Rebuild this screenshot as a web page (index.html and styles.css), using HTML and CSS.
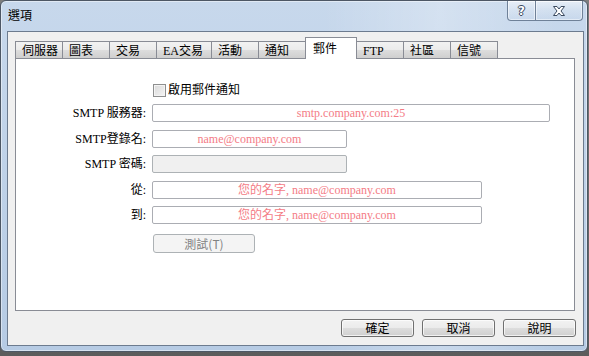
FILE: index.html
```html
<!DOCTYPE html>
<html lang="zh-Hant">
<head>
    <meta charset="UTF-8">
    <meta name="viewport" content="width=device-width, initial-scale=1.0">
    <title>選項</title>
    <link rel="stylesheet" href="styles.css">
</head>
<body>
    <div class="window">
        <div class="titlebar">
            <span class="title">選項</span>
            <div class="caption-buttons">
                <span class="cap-btn help">?</span>
                <span class="cap-btn close">
                    <svg width="14" height="10" viewBox="0 0 14 10">
                        <path d="M1.5 0.5 H5 L7 3 L9 0.5 H12.5 L9 5 L12.5 9.5 H9 L7 7 L5 9.5 H1.5 L5 5 Z" fill="#ffffff" stroke="#3b4a5f" stroke-width="1"/>
                    </svg>
                </span>
            </div>
        </div>

        <div class="client">
            <div class="tabs">
                <div class="tab">伺服器</div>
                <div class="tab">圖表</div>
                <div class="tab">交易</div>
                <div class="tab tab-wide">EA交易</div>
                <div class="tab">活動</div>
                <div class="tab">通知</div>
                <div class="tab active">郵件</div>
                <div class="tab">FTP</div>
                <div class="tab">社區</div>
                <div class="tab">信號</div>
            </div>

            <div class="panel">
                <div class="form">
                    <span></span>
                    <label class="check-row">
                        <span class="checkbox"></span>
                        啟用郵件通知
                    </label>

                    <span class="label">SMTP 服務器:</span>
                    <input class="field field-long" type="text" placeholder="smtp.company.com:25">

                    <span class="label">SMTP登錄名:</span>
                    <input class="field field-short" type="text" placeholder="name@company.com">

                    <span class="label">SMTP 密碼:</span>
                    <input class="field field-short" type="password" disabled>

                    <span class="label">從:</span>
                    <input class="field field-mid" type="text" placeholder="您的名字, name@company.com">

                    <span class="label">到:</span>
                    <input class="field field-mid" type="text" placeholder="您的名字, name@company.com">

                    <span></span>
                    <button class="btn btn-test" disabled>測試(T)</button>
                </div>
            </div>

            <div class="actions">
                <button class="btn">確定</button>
                <button class="btn">取消</button>
                <button class="btn">說明</button>
            </div>
        </div>
    </div>
</body>
</html>
```

FILE: styles.css
```css
:root {
    --frame: #bcd0e8;
    --client: #f0f0f0;
    --tab-border: #898c95;
    --field-border: #abadb3;
    --hint: #f47c86;
    --text: #000000;
}

body {
    margin: 0;
    width: 589px;
    height: 356px;
    background: linear-gradient(#7d7d7d, #5c5c5c);
    font-family: "Liberation Serif", "Noto Sans CJK TC", serif;
    font-size: 12px;
    color: var(--text);
    overflow: hidden;
}

.window {
    width: 588px;
    height: 352px;
    box-sizing: border-box;
    border: 1px solid #4d5765;
    border-radius: 6px;
    background:
        linear-gradient(90deg, rgba(255, 255, 255, 0) 55%, rgba(255, 255, 255, 0.25) 75%, rgba(255, 255, 255, 0) 95%),
        linear-gradient(#c7d8ec, #b6cbe4);
    box-shadow: inset 0 0 0 1px rgba(255, 255, 255, 0.45);
    display: flex;
    flex-direction: column;
}

.titlebar {
    height: 30px;
    display: flex;
    justify-content: space-between;
    align-items: flex-start;
}

.title {
    padding: 7px 0 0 7px;
    font-family: "Noto Sans CJK TC", sans-serif;
    font-size: 12px;
    line-height: 14px;
}

.caption-buttons {
    display: flex;
    margin-right: 4px;
}

.cap-btn {
    height: 20px;
    box-sizing: border-box;
    border: 1px solid #6f8198;
    border-top: none;
    background: linear-gradient(rgba(255, 255, 255, 0.55), rgba(255, 255, 255, 0.2) 50%, rgba(200, 215, 235, 0.3));
    box-shadow: inset 0 0 0 1px rgba(255, 255, 255, 0.5);
    display: flex;
    align-items: center;
    justify-content: center;
}

.help {
    width: 29px;
    border-radius: 0 0 0 4px;
    font-family: "DejaVu Sans", sans-serif;
    font-weight: bold;
    font-size: 12px;
    color: #ffffff;
    text-shadow: 1px 0 #3b4a5f, -1px 0 #3b4a5f, 0 1px #3b4a5f, 0 -1px #3b4a5f;
}

.close {
    width: 47px;
    border-left: none;
    border-radius: 0 0 4px 0;
}

.client {
    margin: 0 3px 5px 6px;
    flex: 1;
    border: 1px solid #6c7b8f;
    background: var(--client);
    display: flex;
    flex-direction: column;
    padding-top: 5px;
}

.tabs {
    display: flex;
    align-items: flex-end;
    height: 21px;
    margin-left: 7px;
    position: relative;
    z-index: 1;
}

.tab {
    width: 48px;
    height: 17px;
    box-sizing: border-box;
    border: 1px solid var(--tab-border);
    border-bottom: none;
    margin-right: -1px;
    padding: 3px 0 0 6px;
    line-height: 13px;
    background: linear-gradient(#f2f2f2, #ebebeb 50%, #dddddd 51%, #cfcfcf);
    white-space: nowrap;
}

.tab-wide {
    width: 56px;
}

.tab.active {
    width: 52px;
    height: 22px;
    margin-bottom: -1px;
    padding: 5px 0 0 7px;
    background: #ffffff;
    position: relative;
}

.panel {
    margin: 0 8px 0 7px;
    height: 253px;
    box-sizing: border-box;
    border: 1px solid var(--tab-border);
    background: #ffffff;
}

.form {
    display: grid;
    grid-template-columns: 130px auto;
    grid-template-rows: 14px 19px 18px 19px 18px 18px 22px;
    column-gap: 6px;
    row-gap: 7px;
    justify-items: start;
    padding-top: 24px;
}

.label {
    justify-self: end;
    align-self: start;
    line-height: 18px;
    white-space: nowrap;
}

.check-row {
    display: flex;
    align-items: center;
    gap: 2px;
    margin-left: 1px;
    margin-top: 1px;
    height: 13px;
    line-height: 13px;
}

.checkbox {
    width: 13px;
    height: 13px;
    box-sizing: border-box;
    border: 1px solid #8e8f8f;
    background: linear-gradient(135deg, #d9d9d9, #f5f5f5);
    box-shadow: inset 0 0 0 1px #f4f4f4;
}

.field {
    height: 18px;
    box-sizing: border-box;
    margin: 0;
    padding: 0 2px;
    border: 1px solid var(--field-border);
    border-radius: 2px;
    background: #ffffff;
    font: inherit;
    text-align: center;
    outline: none;
}

.field::placeholder {
    color: var(--hint);
    opacity: 1;
}

.field:disabled {
    background: #f0f0f0;
    border-color: #adb2b5;
}

.field-long {
    width: 398px;
}

.field-mid {
    width: 330px;
}

.field-short {
    width: 195px;
}

.btn {
    width: 73px;
    height: 18px;
    box-sizing: border-box;
    margin: 0;
    padding: 0;
    border: 1px solid #707070;
    border-radius: 3px;
    background: linear-gradient(#f2f2f2, #ebebeb 50%, #dddddd 51%, #cfcfcf);
    box-shadow: inset 0 0 0 1px rgba(255, 255, 255, 0.7);
    font-family: "Noto Sans CJK TC", sans-serif;
    font-size: 12px;
    line-height: 14px;
    color: var(--text);
}

.btn-test {
    width: 102px;
    height: 19px;
    margin: 3px 0 0 1px;
    border-color: #adb2b5;
    background: #f4f4f4;
    box-shadow: none;
    color: #838383;
}

.actions {
    display: flex;
    justify-content: flex-end;
    gap: 8px;
    margin-top: 8px;
    padding-right: 7px;
}
```
